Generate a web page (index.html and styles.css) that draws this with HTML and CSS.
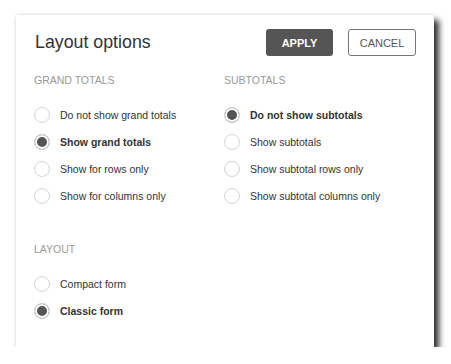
FILE: index.html
```html
<!DOCTYPE html>
<html lang="en">
<head>
    <meta charset="UTF-8">
    <title>Layout options</title>
    <link rel="stylesheet" href="styles.css">
</head>
<body>
    <div class="dialog">
        <div class="header">
            <h1>Layout options</h1>
            <div class="buttons">
                <button class="btn apply">APPLY</button>
                <button class="btn cancel">CANCEL</button>
            </div>
        </div>

        <div class="columns">
            <div class="group">
                <div class="heading">GRAND TOTALS</div>
                <label class="option"><span class="radio"></span>Do not show grand totals</label>
                <label class="option checked"><span class="radio"></span>Show grand totals</label>
                <label class="option"><span class="radio"></span>Show for rows only</label>
                <label class="option"><span class="radio"></span>Show for columns only</label>
            </div>
            <div class="group">
                <div class="heading">SUBTOTALS</div>
                <label class="option checked"><span class="radio"></span>Do not show subtotals</label>
                <label class="option"><span class="radio"></span>Show subtotals</label>
                <label class="option"><span class="radio"></span>Show subtotal rows only</label>
                <label class="option"><span class="radio"></span>Show subtotal columns only</label>
            </div>
        </div>

        <div class="group layout">
            <div class="heading">LAYOUT</div>
            <label class="option"><span class="radio"></span>Compact form</label>
            <label class="option checked"><span class="radio"></span>Classic form</label>
        </div>
    </div>
</body>
</html>
```

FILE: styles.css
```css
body {
    margin: 0;
    background: #fff;
    font-family: 'Liberation Sans', Arial, sans-serif;
    color: #333;
}

.dialog {
    box-sizing: border-box;
    width: 418px;
    height: 332px;
    margin: 15px 0 0 16px;
    padding: 14px 18px;
    background: #fff;
    box-shadow: 5px 5px 6px rgba(0, 0, 0, 0.8), 0 0 3px rgba(0, 0, 0, 0.15);
}

.header {
    display: flex;
    align-items: center;
    justify-content: space-between;
    height: 27px;
}

h1 {
    margin: 0 0 0 1px;
    font-size: 17.8px;
    font-weight: normal;
    color: #333;
}

.buttons {
    display: flex;
    gap: 15px;
}

.btn {
    box-sizing: border-box;
    height: 27px;
    width: 67px;
    border-radius: 3px;
    font-family: 'Liberation Sans', Arial, sans-serif;
    font-size: 11px;
    padding: 0;
}

.apply {
    background: #555;
    color: #fff;
    border: none;
    font-weight: bold;
}

.cancel {
    width: 68px;
    background: #fff;
    color: #555;
    border: 1px solid #777;
}

.columns {
    display: grid;
    grid-template-columns: 190px 1fr;
    margin-top: 18px;
}

.heading {
    font-size: 10.5px;
    line-height: 13px;
    color: #999;
    margin-bottom: 14px;
}

.option {
    display: flex;
    align-items: center;
    height: 27px;
    font-size: 10.5px;
    color: #333;
}

.option.checked {
    font-weight: bold;
}

.radio {
    box-sizing: border-box;
    width: 16px;
    height: 16px;
    margin-right: 10px;
    border: 1px solid #d4d4d4;
    border-radius: 50%;
    background: #fff;
}

.checked .radio {
    background: #555;
    box-shadow: inset 0 0 0 2px #fff;
}

.layout {
    margin-top: 34px;
}
```
